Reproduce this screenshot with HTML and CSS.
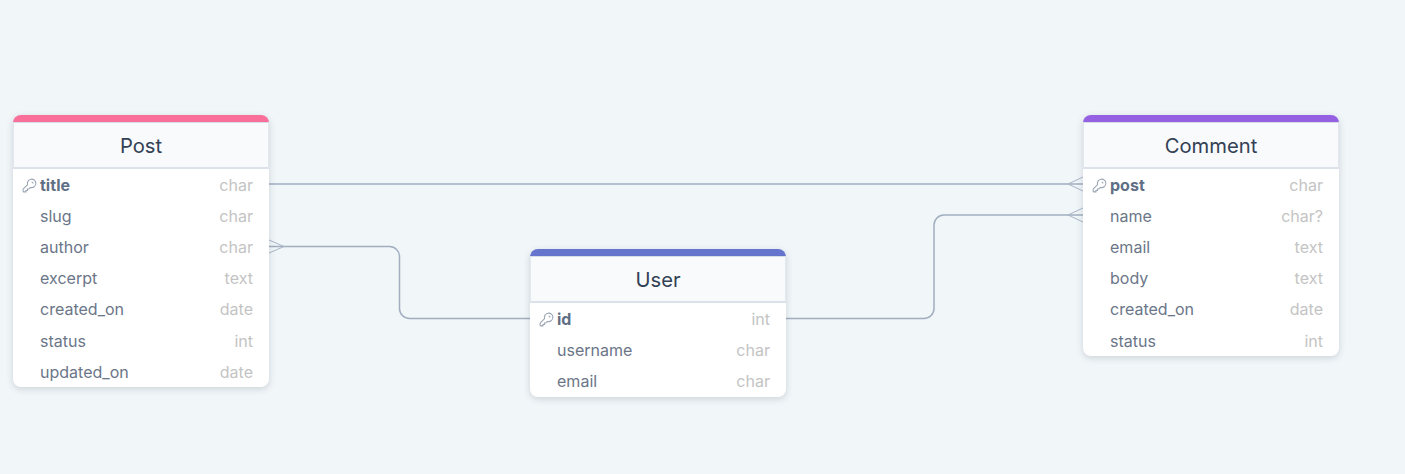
FILE: index.html
```html
<!DOCTYPE html>
<html lang="en">
<head>
<meta charset="utf-8">
<title>Schema</title>
<link rel="stylesheet" href="styles.css">
</head>
<body>
<main class="canvas">
  <svg class="edges" width="1405" height="474" viewBox="0 0 1405 474" fill="none">
    <path class="edge" d="M269 184H1083"/>
    <path class="crow" d="M1083 177L1068 184L1083 191"/>
    <path class="edge" d="M269 246.500H389.500a10 10 0 0 1 10 10V308.500a10 10 0 0 0 10 10H530"/>
    <path class="crow" d="M269 240L284 246.500L269 253"/>
    <path class="edge" d="M786 318.500H924a10 10 0 0 0 10 -10V225a10 10 0 0 1 10 -10H1083"/>
    <path class="crow" d="M1083 208L1068 215L1083 222"/>
  </svg>

  <section class="table table-post">
    <h2 class="name">Post</h2>
    <ul class="rows">
      <li class="row key"><svg class="key-icon" viewBox="0 0 24 24" fill="none"><path d="M15 7a2 2 0 012 2m4 0a6 6 0 01-7.743 5.743L11 17H9v2H7v2H4a1 1 0 01-1-1v-2.586a1 1 0 01.293-.707l5.964-5.964A6 6 0 1121 9z"/></svg><span class="field">title</span><span class="type">char</span></li>
      <li class="row"><span class="field">slug</span><span class="type">char</span></li>
      <li class="row"><span class="field">author</span><span class="type">char</span></li>
      <li class="row"><span class="field">excerpt</span><span class="type">text</span></li>
      <li class="row"><span class="field">created_on</span><span class="type">date</span></li>
      <li class="row"><span class="field">status</span><span class="type">int</span></li>
      <li class="row"><span class="field">updated_on</span><span class="type">date</span></li>
    </ul>
  </section>

  <section class="table table-user">
    <h2 class="name">User</h2>
    <ul class="rows">
      <li class="row key"><svg class="key-icon" viewBox="0 0 24 24" fill="none"><path d="M15 7a2 2 0 012 2m4 0a6 6 0 01-7.743 5.743L11 17H9v2H7v2H4a1 1 0 01-1-1v-2.586a1 1 0 01.293-.707l5.964-5.964A6 6 0 1121 9z"/></svg><span class="field">id</span><span class="type">int</span></li>
      <li class="row"><span class="field">username</span><span class="type">char</span></li>
      <li class="row"><span class="field">email</span><span class="type">char</span></li>
    </ul>
  </section>

  <section class="table table-comment">
    <h2 class="name">Comment</h2>
    <ul class="rows">
      <li class="row key"><svg class="key-icon" viewBox="0 0 24 24" fill="none"><path d="M15 7a2 2 0 012 2m4 0a6 6 0 01-7.743 5.743L11 17H9v2H7v2H4a1 1 0 01-1-1v-2.586a1 1 0 01.293-.707l5.964-5.964A6 6 0 1121 9z"/></svg><span class="field">post</span><span class="type">char</span></li>
      <li class="row"><span class="field">name</span><span class="type">char?</span></li>
      <li class="row"><span class="field">email</span><span class="type">text</span></li>
      <li class="row"><span class="field">body</span><span class="type">text</span></li>
      <li class="row"><span class="field">created_on</span><span class="type">date</span></li>
      <li class="row"><span class="field">status</span><span class="type">int</span></li>
    </ul>
  </section>
</main>
</body>
</html>
```

FILE: styles.css
```css
html, body {
  margin: 0;
  padding: 0;
  height: 100%;
  overflow: hidden;
}

body {
  background: #f1f6f9;
  font-family: Inter, "Liberation Sans", sans-serif;
}

.canvas {
  position: relative;
  width: 1405px;
  height: 474px;
  overflow: hidden;
  background: #f1f6f9;
}

.edges {
  position: absolute;
  left: 0;
  top: 0;
}

.edge {
  stroke: #a0aec0;
  stroke-width: 1.500;
}

.crow {
  stroke: #a9b5c6;
  stroke-width: 1;
}

.table {
  position: absolute;
  width: 256px;
  box-sizing: border-box;
  background: #fff;
  border-top: 7px solid;
  border-radius: 8px;
  box-shadow: 0 2px 7px rgba(60, 70, 80, 0.2);
}

.table-post {
  left: 13px;
  top: 115px;
  border-top-color: #fa6e9a;
}

.table-user {
  left: 530px;
  top: 249px;
  border-top-color: #6574cd;
}

.table-comment {
  left: 1083px;
  top: 115px;
  border-top-color: #9561e2;
}

.name {
  margin: 0;
  height: 47px;
  box-sizing: border-box;
  display: flex;
  align-items: center;
  justify-content: center;
  background: #f8fafc;
  border: 1px solid #e2e8f0;
  border-top-color: #d5dde8;
  border-bottom: 2px solid #dbe2ec;
  font-size: 20.200px;
  font-weight: 400;
  color: #334155;
}

.rows {
  list-style: none;
  margin: 0;
  padding: 0;
}

.row {
  position: relative;
  height: 31.200px;
  display: flex;
  align-items: center;
  justify-content: space-between;
  padding: 0 16px 0 27px;
  font-size: 16.050px;
}

.field {
  color: #6b7688;
}

.type {
  color: #c4c4c4;
}

.key .field {
  font-weight: 700;
  color: #5f6f85;
}

.key-icon {
  position: absolute;
  left: 8px;
  top: 8px;
  width: 17px;
  height: 17px;
  stroke: #9aa5b5;
  stroke-width: 1.500;
}
```
